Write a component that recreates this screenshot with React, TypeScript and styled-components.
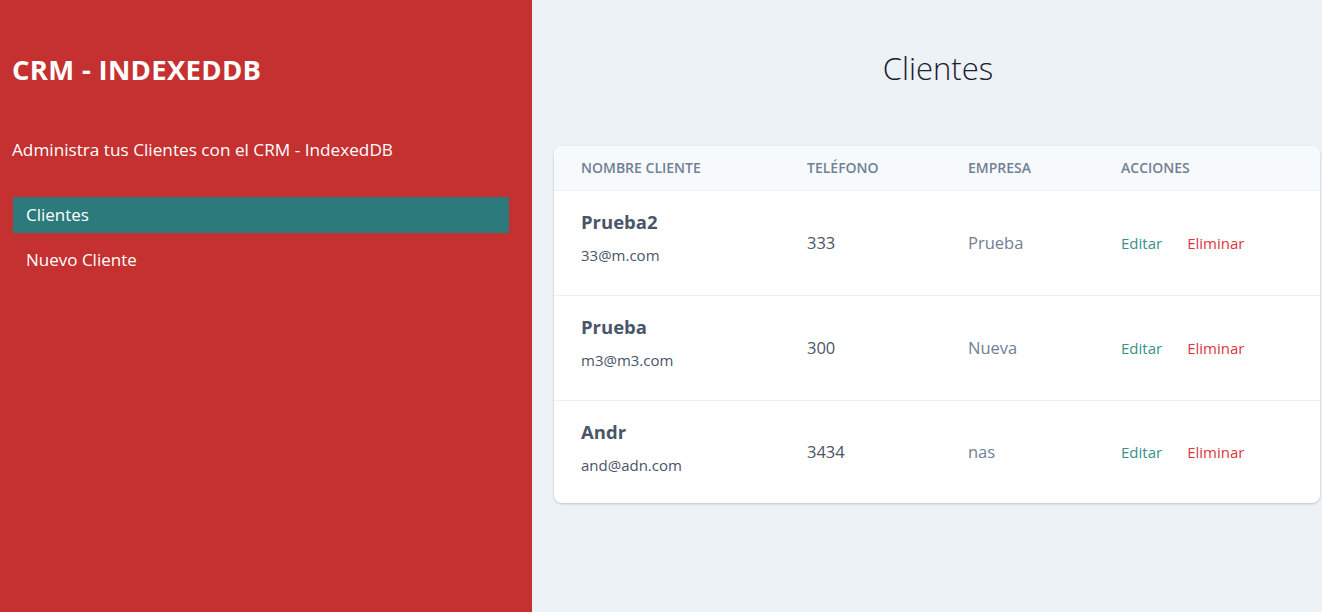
import React from "react";
import styled, { createGlobalStyle } from "styled-components";

const Global = createGlobalStyle`
  html, body { margin: 0; padding: 0; }
  body { font-family: "Open Sans", "Noto Sans", sans-serif; }
  * { box-sizing: border-box; }
`;

const Layout = styled.div`
  display: flex;
  width: 1322px;
  height: 612px;
`;

const Sidebar = styled.aside`
  width: 532px;
  flex: none;
  background: #c53030;
  color: #fff;
  padding: 52px 23px 0 13px;
`;

const Brand = styled.h1`
  margin: 0 0 0 -1px;
  font-size: 27.5px;
  font-weight: 700;
  line-height: 36px;
  letter-spacing: 0.3px;
`;

const Tagline = styled.p`
  margin: 49px 0 0 -1px;
  font-size: 17.2px;
  line-height: 26px;
`;

const Nav = styled.nav`
  margin-top: 34px;
  display: flex;
  flex-direction: column;
  gap: 9px;
`;

const NavLink = styled.a<{ $active?: boolean }>`
  display: block;
  padding: 5px 13px;
  font-size: 17px;
  line-height: 26px;
  color: #fff;
  text-decoration: none;
  background: ${(p) => (p.$active ? "#2c7a7b" : "transparent")};
`;

const Main = styled.main`
  flex: 1;
  background: #edf2f7;
  padding: 42px 2px 0 22px;
`;

const Title = styled.h2`
  margin: 0;
  text-align: center;
  font-size: 31px;
  font-weight: 300;
  line-height: 52px;
  color: #1a202c;
  padding-left: 2px;
`;

const Card = styled.div`
  margin-top: 52px;
  background: #fff;
  border-radius: 8px;
  box-shadow: 0 1px 3px rgba(0, 0, 0, 0.12), 0 1px 2px rgba(0, 0, 0, 0.08);
  overflow: hidden;
`;

const Table = styled.table`
  width: 100%;
  border-collapse: collapse;
  table-layout: fixed;
`;

const Th = styled.th<{ $w?: number }>`
  ${(p) => (p.$w ? `width: ${p.$w}px;` : "")}
  background: #f7fafc;
  padding: 0 20px 0 27px;
  height: 44px;
  text-align: left;
  font-size: 14px;
  font-weight: 600;
  color: #718096;
  text-transform: uppercase;
  border-bottom: 1px solid #edf2f7;
`;

const Row = styled.tr`
  height: 105px;
  & + & td { border-top: 1px solid #edf2f7; }
  &:last-child { height: 103px; }
`;

const Td = styled.td<{ $top?: boolean }>`
  padding: ${(p) => (p.$top ? "17px 20px 0 27px" : "0 20px 0 27px")};
  vertical-align: ${(p) => (p.$top ? "top" : "middle")};
`;

const Name = styled.div`
  font-size: 18.5px;
  font-weight: 700;
  line-height: 28px;
  color: #4a5568;
`;

const Email = styled.div`
  margin-top: 7px;
  font-size: 15px;
  line-height: 24px;
  color: #4a5568;
`;

const Phone = styled.span`
  font-size: 16.5px;
  color: #4a5568;
`;

const Company = styled.span`
  font-size: 16.5px;
  color: #718096;
`;

const Action = styled.a<{ $danger?: boolean }>`
  font-size: 15px;
  color: ${(p) => (p.$danger ? "#d9383e" : "#38918b")};
  text-decoration: none;
  margin-right: 25px;
`;

const clients = [
  { name: "Prueba2", email: "33@m.com", phone: "333", company: "Prueba" },
  { name: "Prueba", email: "m3@m3.com", phone: "300", company: "Nueva" },
  { name: "Andr", email: "and@adn.com", phone: "3434", company: "nas" },
];

export default function App() {
  return (
    <>
      <Global />
      <Layout>
        <Sidebar>
          <Brand>CRM - INDEXEDDB</Brand>
          <Tagline>Administra tus Clientes con el CRM - IndexedDB</Tagline>
          <Nav>
            <NavLink $active href="#">Clientes</NavLink>
            <NavLink href="#">Nuevo Cliente</NavLink>
          </Nav>
        </Sidebar>
        <Main>
          <Title>Clientes</Title>
          <Card>
            <Table>
              <thead>
                <tr>
                  <Th $w={226}>Nombre Cliente</Th>
                  <Th $w={161}>Teléfono</Th>
                  <Th $w={153}>Empresa</Th>
                  <Th>Acciones</Th>
                </tr>
              </thead>
              <tbody>
                {clients.map((c) => (
                  <Row key={c.email}>
                    <Td $top>
                      <Name>{c.name}</Name>
                      <Email>{c.email}</Email>
                    </Td>
                    <Td><Phone>{c.phone}</Phone></Td>
                    <Td><Company>{c.company}</Company></Td>
                    <Td>
                      <Action href="#">Editar</Action>
                      <Action $danger href="#">Eliminar</Action>
                    </Td>
                  </Row>
                ))}
              </tbody>
            </Table>
          </Card>
        </Main>
      </Layout>
    </>
  );
}
